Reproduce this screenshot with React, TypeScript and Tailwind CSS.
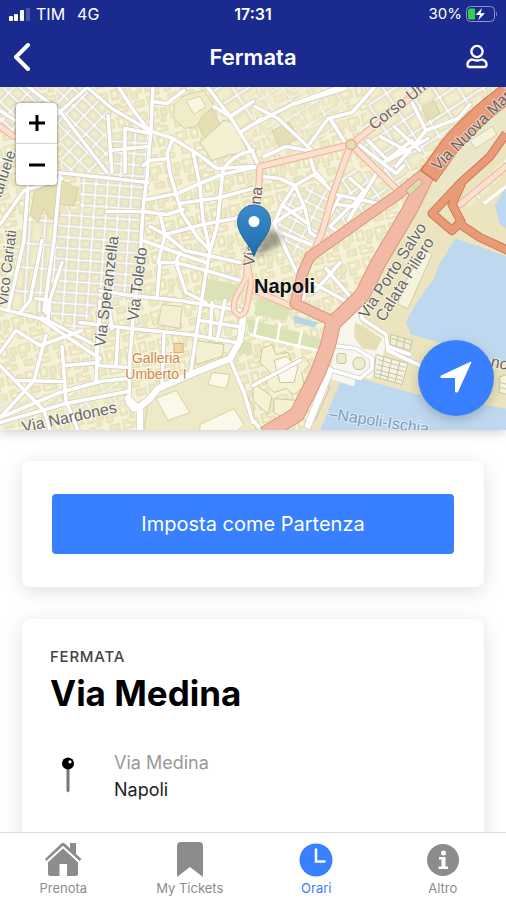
import React from 'react';

// streets without a name on the map, drawn twice (casing + white fill)
const streets = [
  'M153 86 L151 128 L147 176 L143 209 L140 260 L133 320 L130 355 L129 400',
  'M86 86 L112 108 L149 130 L173 138 L197 153 L217 168 L253 166',
  'M118 86 L135 112 L150 131',
  'M207 86 L230 116 L253 153 L259 166',
  'M152 101 L167 103 L184 90',
  'M230 116 L214 106 M230 116 L253 101 M240 132 L262 118',
  'M28 86 L60 111 L107 172 M86 88 L57 114',
  'M0 110 L28 128 M0 160 L24 150 M62 178 L24 190 L0 224',
  'M173 138 L167 153 L170 173 L182 213 L197 236 L210 250',
  'M193 151 L200 186 L203 219 L210 250',
  'M223 168 L220 199 L217 226 L210 250 L206 272',
  'M147 199 L177 193 L200 183 L222 174 L259 166',
  'M179 203 L220 197 L253 188',
  'M107 211 L143 211 L167 214 L183 209',
  'M165 234 L203 224 L245 216 M165 234 L150 226 M165 234 L185 250 L240 262',
  'M160 214 L165 234 L158 262 M143 240 L176 252 L206 262',
  'M143 165 L150 160 L167 158 M223 170 Q232 154 253 150',
  'M58 172 L148 182 M60 176 L54 240 L44 310',
  'M108 115 L112 172 M125 128 L125 172 M125 128 L151 133 M110 150 L148 146',
  'M28 184 L24 240 L8 310 M42 240 L30 300 L20 312',
  'M0 308 L40 318 L80 345 L100 358',
  'M42 317 L96 345 L98 362 M40 345 L82 330 M48 318 L50 300 L36 298 M62 262 L46 312',
  'M46 335 L34 380 L16 400 L0 417 M0 365 L44 410 L50 430',
  'M0 417 L60 392 L100 381 L128 378 M0 422 L66 403 L128 391',
  'M14 380 L62 381 M62 346 L66 400 L78 430 M100 300 L96 381',
  'M16 330 L0 352 M16 330 L40 345 M66 365 L98 362',
  'M100 290 L130 295 L180 300 L240 310',
  'M80 322 L130 328 L190 334 L236 342',
  'M98 365 L128 367 M108 300 L112 328 M118 330 L116 366',
  'M176 262 L160 262 L157 298 M206 272 L197 330 L190 376 M225 300 L217 340 M212 302 L210 336',
  'M176 262 L206 270 L240 280 M200 320 L238 326 M164 334 L162 386',
  'M180 252 L176 262 L186 292 L206 302',
  'M230 359 L244 392 L253 422',
  'M253 124 L292 104 L320 94 L340 86 M255 106 L278 118',
  'M278 118 L312 150 M292 104 L345 88 M310 143 L328 118 L352 112 L375 86',
  'M330 118 L345 142 M264 156 L286 146 L308 150 L314 170 L325 182',
  'M262 176 L280 178 L295 185 L314 174 L336 194 L378 203',
  'M295 185 L282 205 L274 223 L287 252 M295 185 L305 208 L310 232 L322 240',
  'M274 223 L290 212 L304 206 M283 205 L306 222 M276 230 L316 246',
  'M350 178 L364 190 L352 206 L337 204 M378 170 L364 194 L348 220',
  'M360 145 L396 173 L404 165 M368 140 L388 160 L428 138',
  'M412 102 L426 130 L396 166 M426 130 L458 118 L470 104',
  'M380 136 L410 152 M394 126 L420 150 M384 162 L412 140',
  'M350 206 L330 226 L342 234 M340 196 L318 236',
  'M274 223 L292 262 L305 290 L300 310 M312 282 L352 304 M316 290 L340 262 M326 268 L350 296',
  'M253 385 L300 360 M253 420 L262 430',
  'M408 216 L390 250 L361 305 L362 318 L386 334 L388 350 L420 365',
  'M388 346 L410 354 M334 345 L356 348 L372 358 L372 368 L360 378 L333 370',
];

// wide white avenues
const avenues = [
  'M129 402 L134 408 L140 406 L150 398 L158 388 L190 374 L230 358 L240 340 L243 318',
  'M128 398 L140 410 L140 430',
  'M330 370 L308 425',
];

type Label = { text: string; x: number; y: number; angle: number; size: number; color?: string };

const labels: Label[] = [
  { text: 'Emanuele', x: -5, y: 216, angle: -72, size: 15 },
  { text: 'Vico Cariati', x: 7, y: 306, angle: -83, size: 15 },
  { text: 'Via Speranzella', x: 105, y: 347, angle: -83, size: 16 },
  { text: 'Via Toledo', x: 138, y: 321, angle: -83, size: 16 },
  { text: 'Via Medina', x: 254, y: 266, angle: -84, size: 16 },
  { text: 'Corso Umberto', x: 374, y: 130, angle: -38, size: 16 },
  { text: 'Via Nuova Marina', x: 438, y: 171, angle: -45, size: 16 },
  { text: 'Via Porto Salvo', x: 367, y: 319, angle: -57, size: 16 },
  { text: 'Calata Piliero', x: 384, y: 322, angle: -58, size: 16 },
  { text: 'Via Nardones', x: 23, y: 432, angle: -12, size: 16 },
  { text: '–Napoli-Ischia', x: 328, y: 418, angle: 9, size: 16, color: '#7d9dbe' },
  { text: 'no', x: 490, y: 366, angle: 12, size: 16 },
];

const BlockPattern = ({ id, angle, w, h }: { id: string; angle: number; w: number; h: number }) => (
  <pattern id={id} width={w} height={h} patternUnits="userSpaceOnUse" patternTransform={`rotate(${angle})`}>
    <rect width={w} height={h} fill="#fdfdfb" />
    <rect x="2" y="2" width={w - 3} height={h - 3} fill="#f1eed0" stroke="#d3cfbd" strokeWidth="1" />
    <rect x="4" y="4" width={w - 7} height={h - 7} fill="#f2eecb" stroke="#e1dbb4" strokeWidth="0.6" />
  </pattern>
);

const CityMap = () => (
  <svg
    className="block h-full w-full"
    viewBox="0 86 506 344"
    preserveAspectRatio="xMidYMid slice"
    fontFamily='"Liberation Sans", Arial, sans-serif'
    role="img"
    aria-label="Napoli"
  >
    <defs>
      <pattern id="lots" width="34" height="28" patternUnits="userSpaceOnUse" patternTransform="rotate(-14)">
        <rect width="34" height="28" fill="#f5f2d8" />
        <g fill="#eee9c3" stroke="#dbd5ac" strokeWidth="0.8">
          <path d="M2 3h11v8h-5v5h-6z" />
          <rect x="17" y="2" width="7" height="10" />
          <path d="M27 4h6v7h-3v6h-5v-3h2z" />
          <rect x="4" y="19" width="9" height="6" />
          <path d="M17 17h6v4h7v5h-13z" />
        </g>
        <g fill="#f8f6df">
          <rect x="4" y="5" width="4" height="3" />
          <rect x="19" y="5" width="3" height="4" />
          <rect x="19" y="22" width="5" height="2" />
        </g>
      </pattern>
      <BlockPattern id="diagonal" angle={44} w={14} h={12} />
      <BlockPattern id="quarter" angle={4} w={12} h={11} />
      <BlockPattern id="long" angle={4} w={15} h={24} />
      <BlockPattern id="east" angle={-33} w={21} h={16} />
      <BlockPattern id="old" angle={28} w={13} h={11} />
      <linearGradient id="pin" x1="0" y1="0" x2="0" y2="1">
        <stop offset="0" stopColor="#3b8ccb" />
        <stop offset="1" stopColor="#1f6cab" />
      </linearGradient>
      <filter id="pinShadow" x="-50%" y="-50%" width="200%" height="200%">
        <feGaussianBlur stdDeviation="3" />
      </filter>
    </defs>

    <rect y="86" width="506" height="344" fill="url(#lots)" />

    {/* dense blocks */}
    <path d="M56 86 L84 86 L108 108 L108 172 L62 172 L58 112Z" fill="url(#diagonal)" />
    <path d="M0 86 L30 86 L58 112 L58 130 L0 130Z" fill="url(#diagonal)" />
    <path d="M108 132 L150 132 L143 209 L80 209 L80 176 L108 172Z" fill="url(#quarter)" />
    <path d="M62 210 L143 210 L136 300 L100 300 L78 330 L46 312 L54 240Z" fill="url(#quarter)" />
    <path d="M28 215 L60 215 L46 312 L8 308Z" fill="url(#long)" />
    <path d="M207 86 L253 86 L253 150Z" fill="url(#east)" />
    <path d="M253 86 L345 86 L350 112 L312 150 L262 162Z" fill="url(#east)" opacity="0.45" />
    <path d="M375 86 L490 86 L428 150 L396 186 L356 146Z" fill="url(#east)" />
    <path d="M283 190 L334 186 L316 245 L290 255 L272 222Z" fill="url(#old)" />
    <path d="M345 160 L392 192 L320 242 L334 198Z" fill="url(#east)" />
    <path d="M0 400 L128 380 L128 408 L0 426Z" fill="url(#east)" opacity="0.5" />

    {/* public buildings */}
    <g fill="#e6dfb4" stroke="#d3ca9a" strokeWidth="0.8">
      <path d="M35 190 L62 180 L78 188 L74 205 L58 204 L60 216 L50 218 L44 208 L38 222 L30 214Z" />
      <path d="M195 120 L212 108 L220 124 L206 138Z" />
      <path d="M272 130 L290 122 L298 138 L280 148Z" />
      <path d="M422 108 L434 100 L440 112 L428 120Z" />
    </g>
    {/* cloister */}
    <path d="M174 104 L186 94 L204 90 L214 106 L204 114 L196 126 L184 128 L174 118Z" fill="#f0ecca" stroke="#d8d1a4" />
    <path d="M186 100 L200 96 L206 106 L194 114Z" fill="#f9f7e4" stroke="#d8d1a4" />
    <path d="M200 142 L224 120 L234 122 L248 152 L230 154 L212 160Z" fill="#f4f1d2" stroke="#d3ccab" />
    <path d="M157 390 L228 361 L253 405 L256 430 L144 430 L148 404Z" fill="#eeeac8" stroke="#d8d1a4" />
    <path d="M156 398 L176 390 L190 412 L168 420Z M212 372 L230 374 L226 388 L208 384Z M200 424 L234 408 L244 424 L238 430 L200 430Z" fill="#faf8e8" stroke="#d8d1a4" />
    <rect x="174" y="343" width="9" height="9" fill="#efd3a0" stroke="#dcb273" />
    <path d="M195 340 L224 344 L222 356 L196 364Z" fill="#f4f1d2" stroke="#cfca9c" />
    <path d="M162 304 L182 306 L180 328 L158 324Z" fill="#f3f0d2" stroke="#d3ccab" />

    {/* gardens */}
    <g fill="#dbe2b6">
      <path d="M206 278 L238 284 L234 302 L204 298Z" />
      <path d="M246 318 L300 332 L326 340 L324 350 L250 334Z" />
      <path d="M258 296 L292 308 L286 320 L254 314Z" />
      <path d="M240 340 L252 342 L250 354 L238 352Z" />
    </g>
    <path d="M294 315 L318 322 L314 327 L294 322Z" fill="#b5d6e4" />
    <path d="M258 316 L254 336 M280 322 L277 342 M302 330 L298 348 M250 334 L326 352" fill="none" stroke="#fff" strokeWidth="2.5" />
    <g fill="#f5f2d4" stroke="#cfc89a" strokeWidth="1">
      <path d="M262 348 L272 344 L276 354 L288 352 L292 362 L304 356 L310 364 L302 372 L304 386 L294 394 L286 388 L274 392 L266 384 L270 372 L260 362Z" />
      <path d="M274 360 L286 356 L298 366 L294 382 L280 382Z" fill="#fbf9ea" />
      <path d="M253 382 L272 396 L268 414 L253 400Z" />
      <path d="M274 398 L298 400 L288 420 L274 412Z" />
    </g>

    {/* harbour */}
    <path d="M506 92 L470 140 L432 180 L412 212 L366 300 L340 345 L330 380 L306 430 L506 430Z" fill="#ebe4be" />
    <path d="M506 92 L440 172 L426 200 L440 205 L475 170 L506 130Z" fill="#eae7c9" />
    <path d="M470 140 L492 126 L497 134 L475 148Z" fill="#f5f3dc" stroke="#d1c99c" strokeWidth="0.8" />
    <path d="M506 186 L495 205 L500 224 L506 228Z M455 238 L446 253 L440 262 L434 278 L424 292 L416 303 L406 322 L411 334 L433 340 L470 352 L506 363 L506 256 L480 246Z" fill="#bed8ef" />
    <path d="M340 382 L353 385 L357 377 L413 393 L506 408 L506 430 L320 430Z" fill="#bed8ef" />
    <path d="M338 326 L352 300 L362 324 L386 338 L384 352 L372 378 L356 377 L354 386 L330 378Z" fill="#f8f7ef" />
    <path d="M355 322 L364 326 L382 338 L376 350 L362 348 L354 336Z" fill="#e5e0b4" />
    <path d="M402 288 L424 248 L432 254 L408 308 L398 304Z" fill="#f5f3dc" stroke="#d4cda4" />
    <g fill="none" stroke="#c8c2ac" strokeWidth="1">
      <path d="M376 354 L408 363 L402 384 L374 376Z" fill="#f6f3df" />
      <path d="M378 359 L405 367 M377 364 L404 371 M376 369 L403 376 M375 373 L402 380 M384 356 L380 378 M392 358 L387 380 M400 361 L395 382" />
      <path d="M391 334 L412 340 L410 350 L390 344Z" fill="#f1edcf" />
      <path d="M392 338 L411 344 M398 336 L396 346 M405 338 L403 348" />
      <path d="M500 376 L508 374 L508 394 L499 392Z M500 382 L508 384 M500 387 L508 389" fill="#f6f3df" />
      <path d="M322 384 L330 386 L316 418 L306 424Z" fill="#f1edcf" />
    </g>
    <path d="M462 198 L482 180 L490 188 L470 208Z M486 176 L506 158 L506 172 L494 184Z" fill="url(#east)" />
    <path d="M484 203 L506 186" stroke="#fff" strokeWidth="3" />

    {/* streets */}
    <g fill="none" strokeLinejoin="round" strokeLinecap="round">
      <g stroke="#d0ccc2" strokeWidth="5">
        {streets.map((d) => (
          <path key={d} d={d} />
        ))}
      </g>
      <g stroke="#d0ccc2" strokeWidth="8">
        {avenues.map((d) => (
          <path key={d} d={d} />
        ))}
      </g>
      <g stroke="#fff" strokeWidth="3.6">
        {streets.map((d) => (
          <path key={d} d={d} />
        ))}
      </g>
      <g stroke="#fff" strokeWidth="6.6">
        {avenues.map((d) => (
          <path key={d} d={d} />
        ))}
      </g>
    </g>
    <g fill="#efeccb" stroke="#c8c2ac" strokeWidth="1">
      <rect x="337" y="353" width="9" height="10" rx="2" />
      <rect x="353" y="357" width="12" height="12" rx="5" />
    </g>

    {/* secondary roads */}
    <g fill="none" strokeLinejoin="round" strokeLinecap="round">
      <g stroke="#eeb497" strokeWidth="7">
        <path d="M430 82 L351 144 L260 166 L258 196 L247 262" />
        <path d="M351 144 L344 162 L333 193 L322 232 L313 252 M351 144 L398 190" />
        <path d="M506 166 L460 204 M0 126 L14 136 M250 288 L292 306" />
      </g>
      <g stroke="#fce1d0" strokeWidth="5">
        <path d="M430 82 L351 144 L260 166 L258 196 L247 262" />
        <path d="M351 144 L344 162 L333 193 L322 232 L313 252 M351 144 L398 190" />
        <path d="M506 166 L460 204 M0 126 L14 136 M250 288 L292 306" />
      </g>
      <path d="M247 262 L246 278 L236 296 Q230 312 240 315 Q246 314 248 300 L251 282 L248 264" stroke="#eeb497" strokeWidth="6" />
      <path d="M247 262 L246 278 L236 296 Q230 312 240 315 Q246 314 248 300 L251 282 L248 264" stroke="#fce1d0" strokeWidth="4" />
      <circle cx="351" cy="144" r="5" fill="#dfe3b4" stroke="#eeb497" strokeWidth="2" />
    </g>

    {/* main roads */}
    <g fill="none" strokeLinejoin="round">
      <g stroke="#dc957c">
        <path d="M430 168 L398 194 L362 219 L310 256 L302 274 L295 303 L331 320" strokeWidth="11" />
        <path d="M430 168 L410 209 L378 263 L362 295 L333 323 L328 345 L318 372 L297 414 L264 434" strokeWidth="16" />
      </g>
      <g stroke="#f2b9a4">
        <path d="M430 168 L398 194 L362 219 L310 256 L302 274 L295 303 L331 320" strokeWidth="9" />
        <path d="M430 168 L410 209 L378 263 L362 295 L333 323 L328 345 L318 372 L297 414 L264 434" strokeWidth="14" />
      </g>
      <path d="M406 190 L419 178 L423 182 L410 195Z" fill="#d8dfae" stroke="#dc957c" />
      <g stroke="#cf7653">
        <path d="M428 176 L450 145 Q475 116 508 92" strokeWidth="20" />
        <path d="M506 133 L490 156 L460 183 L432 213 L452 230 L461 221 L452 204 L462 182 M456 221 L480 237 L508 250" strokeWidth="9" />
      </g>
      <g stroke="#e99b78">
        <path d="M429 175 L450 145 Q475 116 508 92" strokeWidth="18" />
        <path d="M506 133 L490 156 L460 183 L432 213 L452 230 L461 221 L452 204 L462 182 M456 221 L480 237 L508 250" strokeWidth="7" />
      </g>
    </g>

    <g fill="#666" stroke="#fff" strokeOpacity="0.5" strokeWidth="2" paintOrder="stroke">
      {labels.map((l) => (
        <text key={l.text} transform={`translate(${l.x} ${l.y}) rotate(${l.angle})`} fontSize={l.size} fill={l.color}>
          {l.text}
        </text>
      ))}
    </g>
    <g fill="#d0884a" stroke="#fff" strokeOpacity="0.7" strokeWidth="2" paintOrder="stroke" fontSize="14" textAnchor="middle">
      <text x="156" y="362">Galleria</text>
      <text x="156" y="378">Umberto I</text>
    </g>
    <text x="254" y="292" fontSize="20" fontWeight="700" fill="#111" stroke="#fff" strokeOpacity="0.5" strokeWidth="2" paintOrder="stroke">
      Napoli
    </text>

    {/* marker */}
    <path d="M254 257 L262 238 Q268 226 278 232 Q286 240 274 248Z" fill="#000" opacity="0.35" filter="url(#pinShadow)" />
    <path
      d="M254 256 C250 243 237.500 235 237.500 221 A16.500 16.500 0 0 1 270.500 221 C270.500 235 258 243 254 256Z"
      fill="url(#pin)"
      stroke="#2a6da3"
      strokeWidth="1"
    />
    <circle cx="254" cy="221" r="5.500" fill="#fff" />
  </svg>
);

const StatusBar = () => (
  <div className="grid h-7 grid-cols-3 items-center px-2 text-base">
    <div className="flex items-center gap-3">
      <div className="flex items-center gap-1">
        <svg width="24" height="14" viewBox="0 0 24 14" fill="#fff">
          <rect x="1" y="9" width="4" height="5" rx="1" />
          <rect x="6" y="7" width="4" height="7" rx="1" />
          <rect x="12" y="3" width="4" height="11" rx="1" />
          <rect x="18" y="1" width="4" height="13" rx="1" opacity="0.2" />
        </svg>
        <span>TIM</span>
      </div>
      <span>4G</span>
    </div>
    <div className="text-center font-semibold">17:31</div>
    <div className="flex items-center justify-end gap-1">
      <span className="text-[15px]">30%</span>
      <svg width="32" height="16" viewBox="0 0 32 16">
        <rect x="0.500" y="0.500" width="28" height="15" rx="4" fill="none" stroke="#8f95cc" />
        <path d="M4 2.500h5v11H4a2 2 0 0 1-2-2v-7a2 2 0 0 1 2-2z" fill="#34d14c" />
        <path d="M16 2 L9.500 9 H14 L12 14.500 L19 7.200 H14.500Z" fill="#fff" />
        <path d="M30 5.500 Q32 8 30 10.500Z" fill="#8f95cc" />
      </svg>
    </div>
  </div>
);

const PushPin = () => (
  <svg width="14" height="36" viewBox="0 0 14 36">
    <path d="M5.500 11h3v23l-1.500 1.500L5.500 34z" fill="#777" />
    <circle cx="7" cy="6.500" r="6" fill="#000" />
    <circle cx="9" cy="4.800" r="1.600" fill="#fff" />
  </svg>
);

const HomeIcon = () => (
  <svg width="38" height="38" viewBox="0 0 38 38" fill="currentColor">
    <path d="M19 8 L34 21 V34 a2 2 0 0 1-2 2 H23 V24 H15.500 V36 H6 a2 2 0 0 1-2-2 V21Z" />
    <path d="M1 19 L17.300 3.400 q1.700-1.500 3.400 0 L26 8.200 V3 h6 v11 l5.500 5 -2 2 L19 6 L2.500 21Z" />
    <path d="M3 22 L19 7.200 L35 22" fill="none" stroke="#fff" strokeWidth="1.800" />
  </svg>
);

const BookmarkIcon = () => (
  <svg width="38" height="38" viewBox="0 0 38 38" fill="currentColor">
    <path d="M10 2 h18 a4 4 0 0 1 4 4 V37 L19 27 L6 37 V6 a4 4 0 0 1 4-4Z" />
  </svg>
);

const ClockIcon = () => (
  <svg width="38" height="38" viewBox="0 0 38 38">
    <circle cx="19" cy="20" r="16.500" fill="currentColor" />
    <path d="M19 9.500 V21.500 H27.500" fill="none" stroke="#fff" strokeWidth="2.500" strokeLinecap="round" />
  </svg>
);

const InfoIcon = () => (
  <svg width="38" height="38" viewBox="0 0 38 38">
    <circle cx="19" cy="20" r="16" fill="currentColor" />
    <circle cx="19.500" cy="13" r="2.500" fill="#fff" />
    <path d="M15 17 h6.500 v9.500 H24 V29 H14.500 v-2.500 H17.500 v-7 H15Z" fill="#fff" />
  </svg>
);

const tabs = [
  { name: 'Prenota', icon: <HomeIcon />, active: false },
  { name: 'My Tickets', icon: <BookmarkIcon />, active: false },
  { name: 'Orari', icon: <ClockIcon />, active: true },
  { name: 'Altro', icon: <InfoIcon />, active: false },
];

const App = () => {
  return (
    <div className="flex h-screen flex-col bg-white font-['Inter',sans-serif] text-black">
      <header className="shrink-0 bg-[#1b2a8f] text-white">
        <StatusBar />
        <div className="grid h-[59px] grid-cols-3 items-center px-3">
          <button type="button" aria-label="Indietro" className="justify-self-start">
            <svg width="20" height="30" viewBox="0 0 20 30" fill="none" stroke="#fff" strokeWidth="4" strokeLinecap="round" strokeLinejoin="round">
              <path d="M16 2 L4 14 L16 26" />
            </svg>
          </button>
          <h1 className="text-center text-[22px] font-semibold">Fermata</h1>
          <button type="button" aria-label="Profilo" className="justify-self-end px-1">
            <svg width="26" height="28" viewBox="0 0 26 28" fill="none" stroke="#fff" strokeWidth="2.400">
              <circle cx="13" cy="7.500" r="5.600" />
              <path d="M8 15.500 C5 16.300 3.500 18 3.500 20.500 Q3.500 23 5.500 23 H20.500 Q22.500 23 22.500 20.500 C22.500 18 21 16.300 18 15.500 Q13 17.500 8 15.500Z" />
            </svg>
          </button>
        </div>
      </header>

      <main className="min-h-0 flex-1 overflow-hidden">
        <section className="relative h-[343px] shadow-[0_3px_10px_rgba(0,0,0,0.18)]">
          <CityMap />
          <div className="absolute left-4 top-4 flex flex-col overflow-hidden rounded bg-white shadow-[0_0_3px_rgba(0,0,0,0.6)]">
            <button type="button" aria-label="Zoom avanti" className="flex h-[41px] w-[41px] items-center justify-center border-b border-gray-300">
              <svg width="16" height="16" viewBox="0 0 16 16" stroke="#000" strokeWidth="3">
                <path d="M8 0V16M0 8H16" />
              </svg>
            </button>
            <button type="button" aria-label="Zoom indietro" className="flex h-[41px] w-[41px] items-center justify-center">
              <svg width="16" height="16" viewBox="0 0 16 16" stroke="#000" strokeWidth="3">
                <path d="M0 8H16" />
              </svg>
            </button>
          </div>
          <button
            type="button"
            aria-label="Naviga"
            className="absolute bottom-[14px] right-3 flex h-[76px] w-[76px] items-center justify-center rounded-full bg-[#3880ff] shadow-[0_4px_12px_rgba(0,0,0,0.2)]"
          >
            <svg width="32" height="34" viewBox="0 0 32 34" fill="#fff" stroke="#fff" strokeWidth="1" strokeLinejoin="round">
              <path d="M31 1 L17.500 31 L15.500 31 L15.500 16.500 L1 16.500 L1 15Z" />
            </svg>
          </button>
        </section>

        <section className="mx-[22px] mt-[31px] rounded-lg bg-white px-[30px] py-[33px] shadow-[0_4px_20px_rgba(0,0,0,0.13)]">
          <button type="button" className="h-[60px] w-full rounded bg-[#3880ff] text-xl text-white">
            Imposta come Partenza
          </button>
        </section>

        <section className="mx-[22px] mt-8 h-[300px] rounded-lg bg-white px-7 pt-[26px] shadow-[0_4px_20px_rgba(0,0,0,0.13)]">
          <p className="text-[15px] font-medium leading-6 tracking-wider text-[#444]">FERMATA</p>
          <h2 className="text-[35px] font-bold leading-[48px]">Via Medina</h2>
          <div className="mt-8 flex">
            <div className="flex w-9 justify-center pt-2">
              <PushPin />
            </div>
            <div className="ml-7 text-lg leading-[27px]">
              <p className="text-[#999]">Via Medina</p>
              <p className="text-[#222]">Napoli</p>
            </div>
          </div>
        </section>
      </main>

      <nav className="relative flex h-[68px] shrink-0 border-t border-[#dcdcdc] bg-white">
        {tabs.map((tab) => (
          <a
            key={tab.name}
            href="#"
            className={
              tab.active
                ? 'flex flex-1 flex-col items-center pt-[7px] text-[13px] leading-5 text-[#3880ff]'
                : 'flex flex-1 flex-col items-center pt-[7px] text-[13px] leading-5 text-[#8c8c8c]'
            }
          >
            {tab.icon}
            <span>{tab.name}</span>
          </a>
        ))}
      </nav>
    </div>
  );
};

export default App;
